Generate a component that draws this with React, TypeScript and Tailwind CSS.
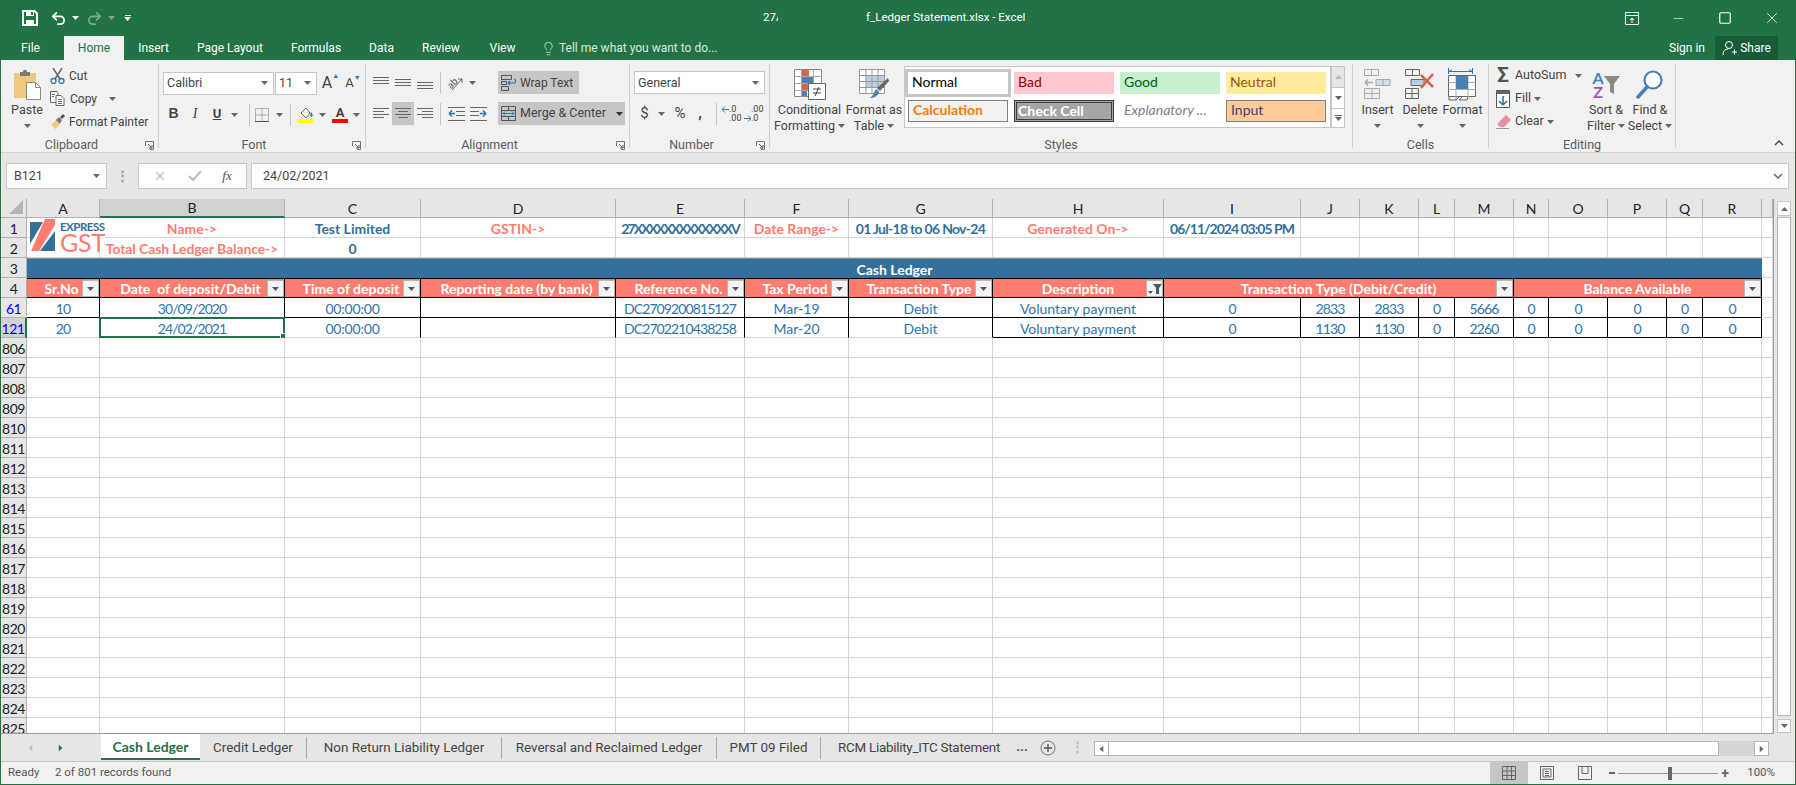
import { ReactNode } from "react";
import { Lightbulb, Minus, Redo2, Square, Undo2, X } from "lucide-react";

const uiFont = "font-['Roboto',sans-serif]";
const cellFont = "font-['Lato',sans-serif]";
const gridCols =
  "grid-cols-[26px_73px_185px_136px_195px_129px_104px_144px_171px_137px_59px_59px_36px_59px_35px_59px_59px_36px_59px_11px]";

const columns = ["A", "B", "C", "D", "E", "F", "G", "H", "I", "J", "K", "L", "M", "N", "O", "P", "Q", "R", ""];
const emptyRows = Array.from({ length: 20 }, (_, i) => 806 + i);

const ribbonTabs = [
  { name: "Insert", width: "w-[59px]" },
  { name: "Page Layout", width: "w-[94px]" },
  { name: "Formulas", width: "w-[78px]" },
  { name: "Data", width: "w-[53px]" },
  { name: "Review", width: "w-[66px]" },
  { name: "View", width: "w-[57px]" },
];

const tabs = [
  { name: "Credit Ledger", width: "w-[107px]" },
  { name: "Non Return Liability Ledger", width: "w-[195px]" },
  { name: "Reversal and Reclaimed Ledger", width: "w-[215px]" },
  { name: "PMT 09 Filed", width: "w-[104px]" },
  { name: "RCM Liability_ITC Statement", width: "w-[191px] pl-[5px] tracking-[-0.25px]" },
];

const data = [
  { row: 61, vals: ["10", "30/09/2020", "00:00:00", "", "DC2709200815127", "Mar-19", "Debit", "Voluntary payment", "0", "2833", "2833", "0", "5666", "0", "0", "0", "0", "0"] },
  { row: 121, vals: ["20", "24/02/2021", "00:00:00", "", "DC2702210438258", "Mar-20", "Debit", "Voluntary payment", "0", "1130", "1130", "0", "2260", "0", "0", "0", "0", "0"] },
];

function Caret({ color = "#666" }: { color?: string }) {
  return (
    <svg width="7" height="4" viewBox="0 0 7 4" className="shrink-0">
      <path d="M0 0h7L3.5 4z" fill={color} />
    </svg>
  );
}

function Launcher() {
  return (
    <svg width="9" height="9" viewBox="0 0 9 9" className="shrink-0">
      <path d="M.5 5V.5H8.5V8.5H5" fill="none" stroke="#777" />
      <path d="M3 3l4 4M7 4v3H4" fill="none" stroke="#555" />
    </svg>
  );
}

function Sep() {
  return <div className="w-px h-[22px] bg-[#c6c6c6] shrink-0" />;
}

function Group({ width, label, launcher, children }: { width: string; label: string; launcher?: boolean; children: ReactNode }) {
  return (
    <section className={`${width} h-[84px] shrink-0 border-r border-[#cfcfcf] flex flex-col`}>
      <div className="h-[72px] shrink-0">{children}</div>
      <div className="h-[12px] flex items-center text-[12.5px] leading-[16px] text-[#5c5c5c] pt-[5px]">
        <span className="flex-1 text-center">{label}</span>
        {launcher ? (
          <span className="w-[16px] flex justify-end pr-[4px] pt-[2px]">
            <Launcher />
          </span>
        ) : null}
      </div>
    </section>
  );
}

function Slot({ w, children }: { w: string; children?: ReactNode }) {
  return <div className={`${w} h-[23px] flex items-center justify-center shrink-0`}>{children}</div>;
}

function LargeButton({ icon, lines, w, caretInline }: { icon: ReactNode; lines: string[]; w: string; caretInline?: boolean }) {
  return (
    <div className={`${w} shrink-0 flex flex-col items-center pt-[3px] text-[12.5px] leading-[16px] text-[#444]`}>
      <div className="h-[35px] flex items-center justify-center">{icon}</div>
      {lines.map((line, i) => (
        <div key={line} className="flex items-center gap-[3px] whitespace-nowrap">
          {line}
          {caretInline && i === lines.length - 1 ? <Caret /> : null}
        </div>
      ))}
      {!caretInline ? (
        <div className="h-[16px] flex items-center">
          <Caret />
        </div>
      ) : null}
    </div>
  );
}

function Combo({ w, text }: { w: string; text: string }) {
  return (
    <div className={`${w} h-[23px] shrink-0 bg-white border border-[#c6c6c6] flex items-center justify-between pl-[3px] pr-[5px] text-[12.5px] text-[#444]`}>
      <span className="pt-[1px]">{text}</span>
      <Caret />
    </div>
  );
}

function Lines({ rows }: { rows: number[][] }) {
  return (
    <svg width="16" height="14" viewBox="0 0 16 14">
      {rows.map(([x1, x2, y]) => (
        <path key={y} d={`M${x1} ${y + 0.5}H${x2}`} stroke="#666" />
      ))}
    </svg>
  );
}

function SaveIcon() {
  return (
    <svg width="16" height="16" viewBox="0 0 16 16">
      <path d="M1 1h11.5L15 3.5V15H1z" fill="none" stroke="#fff" strokeWidth="2" />
      <path d="M4 1h8v5H4z M4 10h8v5H4z" fill="#fff" />
      <path d="M9 2h2v3H9z" fill="#217346" />
    </svg>
  );
}

function PasteIcon() {
  return (
    <svg width="29" height="32" viewBox="0 0 29 32">
      <path d="M1 4h22v25H1z" fill="#edc87e" />
      <path d="M7 3h3c0-3 4-3 4 0h3v4H7z" fill="#7a7a7a" />
      <path d="M13.5 13.5h9l5 5v12h-14z" fill="#fff" stroke="#8a8a8a" />
      <path d="M22.5 13.5v5h5" fill="none" stroke="#8a8a8a" />
    </svg>
  );
}

function CutIcon() {
  return (
    <svg width="15" height="16" viewBox="0 0 15 16">
      <path d="M3 0l7 11M12 0L5 11" stroke="#666" strokeWidth="1.5" />
      <circle cx="3.5" cy="13" r="2.5" fill="none" stroke="#2f75b5" strokeWidth="1.3" />
      <circle cx="11.5" cy="13" r="2.5" fill="none" stroke="#2f75b5" strokeWidth="1.3" />
    </svg>
  );
}

function CopyIcon() {
  return (
    <svg width="15" height="15" viewBox="0 0 15 15">
      <path d="M1 .5h6l1 2v9H.5V.5z" fill="#fff" stroke="#666" />
      <path d="M6 4.5h5l3 3v7H6z" fill="#fff" stroke="#666" />
      <path d="M8 8.5h4M8 10.5h4M8 12.5h4M2 3.5h3M2 5.5h2" stroke="#666" />
    </svg>
  );
}

function PainterIcon() {
  return (
    <svg width="16" height="16" viewBox="0 0 16 16">
      <path d="M1 11l5-5 4 4-4 5-2-1-1-2z" fill="#edc87e" />
      <path d="M6 6l3-3 3 3-2 4z" fill="#777" />
      <path d="M10 3l3-3 2 2-3 3z" fill="#555" />
    </svg>
  );
}

function BorderIcon() {
  return (
    <svg width="14" height="14" viewBox="0 0 14 14">
      <path d="M.5.5h13v13H.5zM7 .5v13M.5 7h13" fill="none" stroke="#777" strokeDasharray="1 1" />
      <path d="M0 13.5h14" stroke="#555" />
    </svg>
  );
}

function FillIcon() {
  return (
    <svg width="16" height="17" viewBox="0 0 16 17">
      <path d="M3 7l5-5 4 5-4 5z" fill="#fff" stroke="#666" />
      <path d="M13 6c2 2 2 4 1 5-2 0-2-3-1-5z" fill="#2f75b5" />
      <path d="M0 13h16v4H0z" fill="#ffff00" />
    </svg>
  );
}

function OrientationIcon() {
  return (
    <svg width="18" height="18" viewBox="0 0 18 18">
      <text x="0" y="12" fontSize="10" fill="#555" fontFamily="Lato" transform="rotate(-45 6 9)">ab</text>
      <path d="M5 16L15 5M15 5h-4M15 5v4" fill="none" stroke="#666" />
    </svg>
  );
}

function WrapIcon() {
  return (
    <svg width="15" height="16" viewBox="0 0 15 16">
      <path d="M.5.5h10v4H.5zM.5 6.5h5v3h-5zM.5 11.5h7v4h-7z" fill="none" stroke="#555" />
      <path d="M7 8h6c2 0 2-4 0-4M7 8l2-2M7 8l2 2" fill="none" stroke="#2f75b5" strokeWidth="1.2" />
    </svg>
  );
}

function MergeIcon() {
  return (
    <svg width="15" height="15" viewBox="0 0 15 15">
      <path d="M.5.5h14v14H.5zM.5 4.5h14M.5 10.5h14M7.5.5v4M7.5 10.5v4" fill="none" stroke="#555" />
      <path d="M2 7.5h11M2 7.5l2-2M2 7.5l2 2M13 7.5l-2-2M13 7.5l-2 2" fill="none" stroke="#2f75b5" />
    </svg>
  );
}

function IndentIcon({ flip }: { flip?: boolean }) {
  return (
    <svg width="17" height="14" viewBox="0 0 17 14" className={flip ? "-scale-x-100" : ""}>
      <path d="M0 .5h17M8 4.5h9M8 8.5h9M0 13.5h17" stroke="#666" />
      <path d="M7 6.5H1M1 6.5l3-3M1 6.5l3 3" fill="none" stroke="#2f75b5" strokeWidth="1.5" />
    </svg>
  );
}

function DecimalIcon({ top, bottom, right }: { top: string; bottom: string; right?: boolean }) {
  return (
    <div className="w-[20px] h-[18px] grid grid-cols-[7px_13px] grid-rows-2 text-[9px] leading-[9px] text-[#444] items-center">
      <svg width="7" height="7" viewBox="0 0 7 7" className={right ? "row-start-2 col-start-1" : "row-start-1 col-start-1"}>
        <path d="M0 3.5h7M0 3.5l3-3M0 3.5l3 3" fill="none" stroke="#2f75b5" transform={right ? "rotate(180 3.5 3.5)" : undefined} />
      </svg>
      <span className="row-start-1 col-start-2">{top}</span>
      <span className="row-start-2 col-start-2">{bottom}</span>
    </div>
  );
}

function ConditionalIcon() {
  return (
    <svg width="32" height="31" viewBox="0 0 32 31">
      <path d="M.5.5h27v27H.5z" fill="#fff" stroke="#888" />
      <path d="M8 1h7v6H8z" fill="#d9634a" />
      <path d="M8 8h11v6H8z" fill="#4a80b8" />
      <path d="M8 15h8v6H8z" fill="#d9634a" />
      <path d="M8 22h5v5H8z" fill="#4a80b8" />
      <path d="M1 7.5h27M1 14.5h27M1 21.5h27M7.5 1v27M19.5 1v27" stroke="#aaa" />
      <path d="M14.5 14.5h17v16h-17z" fill="#fff" stroke="#666" />
      <path d="M19 20h8M19 24h8M25 18l-4 9" stroke="#444" fill="none" />
    </svg>
  );
}

function TableIcon() {
  return (
    <svg width="30" height="31" viewBox="0 0 30 31">
      <path d="M.5.5h25v24H.5z" fill="#fff" stroke="#999" />
      <path d="M7 7h18v11H7z" fill="#b8cde6" />
      <path d="M.5 6.5h25M.5 12.5h25M.5 18.5h25M7 1v24M13 1v24M19 1v24" stroke="#999" />
      <path d="M29 9l1 3-9 10-3-3z" fill="#666" />
      <path d="M17 20l3 3c-1 4-5 6-9 6 3-2 4-6 6-9z" fill="#4a80b8" />
    </svg>
  );
}

function InsertIcon() {
  return (
    <svg width="27" height="31" viewBox="0 0 27 31">
      <path d="M.5.5h14v6H.5zM7.5 1v6M.5 19.5h15v10H.5zM.5 24.5h15M8 20v10" fill="none" stroke="#aaa" />
      <path d="M12 10.5h14v6H12zM19 11v6" fill="#d5dde8" stroke="#aaa" />
      <path d="M9 13.5H1M1 13.5l3-3M1 13.5l3 3" fill="none" stroke="#aaa" strokeWidth="1.5" />
    </svg>
  );
}

function DeleteIcon() {
  return (
    <svg width="30" height="31" viewBox="0 0 30 31">
      <path d="M.5.5h14v6H.5zM7.5 1v6M.5 19.5h13v10H.5zM.5 24.5h13M7 20v10" fill="none" stroke="#666" />
      <path d="M6 10.5h13v6H6z" fill="#b8cde6" stroke="#666" />
      <path d="M16 6l12 12M28 5L16 19" stroke="#d9634a" strokeWidth="2.5" />
    </svg>
  );
}

function FormatIcon() {
  return (
    <svg width="29" height="33" viewBox="0 0 29 33">
      <path d="M1 3.5h23M1 3.5l3-2M24 3.5l-3-2M.5 0v6M24.5 0v6" fill="none" stroke="#2f75b5" />
      <path d="M.5 7.5h27v21H.5z" fill="#fff" stroke="#666" />
      <path d="M.5 14.5h27M.5 21.5h27M8 8v25M20 8v21" stroke="#aaa" />
      <path d="M8 8h12v13H8z" fill="#4a80b8" />
      <path d="M1 29v3h7l3-3M14 29l-3 3h8l1-3" fill="none" stroke="#666" />
    </svg>
  );
}

function FillDownIcon() {
  return (
    <svg width="14" height="18" viewBox="0 0 14 18">
      <path d="M.5.5h13v17H.5z" fill="#fff" stroke="#555" />
      <path d="M1 1h12v3H1z" fill="#666" />
      <path d="M7 6v9M7 15l-4-4M7 15l4-4" fill="none" stroke="#2f75b5" strokeWidth="1.6" />
    </svg>
  );
}

function EraserIcon() {
  return (
    <svg width="15" height="14" viewBox="0 0 15 14">
      <path d="M10 0l5 5-7 7H4L1 9z" fill="#ec8f9c" />
      <path d="M0 13.5h13" stroke="#999" />
    </svg>
  );
}

function SortIcon() {
  return (
    <div className={`h-[31px] flex items-center ${cellFont}`}>
      <div className="flex flex-col items-center text-[16px] leading-[14px] font-bold">
        <span className="text-[#4a80b8]">A</span>
        <span className="text-[#9b59b6]">Z</span>
      </div>
      <svg width="16" height="20" viewBox="0 0 16 20">
        <path d="M0 1h16l-6 8v10l-4-2V9z" fill="#8a8a8a" />
      </svg>
    </div>
  );
}

function FindIcon() {
  return (
    <svg width="28" height="31" viewBox="0 0 28 31">
      <circle cx="17" cy="11" r="8.5" fill="#fff" stroke="#4a80b8" strokeWidth="2.2" />
      <path d="M11 18L2 28" stroke="#4a80b8" strokeWidth="3.5" strokeLinecap="round" />
    </svg>
  );
}

function ExpressLogo() {
  return (
    <div className={`absolute left-[3px] top-[1px] z-10 w-[75px] h-[33px] bg-white flex gap-[5px] overflow-hidden ${cellFont}`}>
      <svg width="25" height="33" viewBox="0 0 25 33" className="shrink-0">
        <path d="M0 3h13L0 25z" fill="#33709b" />
        <path d="M25 12v20H10z" fill="#33709b" />
        <path d="M15 0h10v6L9 32H1z" fill="#ff7c70" />
      </svg>
      <div className="flex flex-col pt-[3px] leading-none">
        <span className="text-[11.5px] font-bold text-[#33709b] tracking-[-0.5px] leading-[10px]">EXPRESS</span>
        <span className="text-[25px] text-[#ff7c70] leading-[20px] tracking-[-0.3px]">GST</span>
      </div>
    </div>
  );
}

function FilterButton({ active }: { active?: boolean }) {
  return (
    <div className="absolute right-0 top-[1px] z-10 w-[17px] h-[17px] bg-[#f3f4f6] border border-[#b8b8b8] flex items-center justify-center">
      {active ? (
        <svg width="14" height="12" viewBox="0 0 14 12">
          <path d="M5 1h9L11 5v6H8V5z" fill="#555" />
          <path d="M0 8h5L2.5 11z" fill="#555" />
        </svg>
      ) : (
        <Caret color="#555" />
      )}
    </div>
  );
}

const plain = "border-r border-b border-[#d4d4d4]";
const center = `flex items-center justify-center overflow-hidden whitespace-nowrap text-[14px] pt-[1px] ${cellFont}`;

function SheetCell({ className, children }: { className?: string; children?: ReactNode }) {
  return <div className={`${center} ${className ?? plain}`}>{children}</div>;
}

function RowHead({ label, selected, blue }: { label: number; selected?: boolean; blue?: boolean }) {
  return (
    <div
      className={`flex items-center justify-center overflow-hidden border-r border-b border-[#b1b1b1] pt-[1px] text-[14px] tracking-[-0.5px] ${cellFont} ${selected ? "bg-[#d2d2d2] border-r-2 border-r-[#217346]" : "bg-[#e6e6e6]"} ${blue ? "text-[#0000ff]" : "text-[#222]"}`}
    >
      {label}
    </div>
  );
}

function Blank({ from }: { from: number }) {
  return (
    <>
      {Array.from({ length: 20 - from }, (_, i) => (
        <SheetCell key={i} />
      ))}
    </>
  );
}

// letter spacing per value: Lato's digits run wider than the sheet's font
function valueTracking(v: string) {
  if (v.includes(":")) return "tracking-[-0.2px]";
  if (/^[DC\d/]+$/.test(v)) return "tracking-[-0.9px]";
  return "";
}

function Sheet() {
  const label = `${plain} font-bold text-[#ff7c70]`;
  const value = `${plain} font-bold text-[#33709b]`;
  const head = "relative bg-[#ff7c70] text-white font-bold border-r border-t border-b border-black";
  const headers = ["Sr.No", "Date  of deposit/Debit", "Time of deposit", "Reporting date (by bank)", "Reference No.", "Tax Period", "Transaction Type"];

  return (
    <div className={`grid ${gridCols} grid-rows-[19px] auto-rows-[20px] w-[1773px] h-[535px] overflow-hidden bg-white border-b border-r border-[#9c9c9c]`}>
      {/* column letters */}
      <div className="bg-[#e6e6e6] border-r border-b border-[#b1b1b1] flex items-end justify-end p-[3px]">
        <svg width="14" height="14" viewBox="0 0 14 14">
          <path d="M14 0v14H0z" fill="#b5b5b5" />
        </svg>
      </div>
      {columns.map((c, i) => (
        <div
          key={i}
          className={`flex items-center justify-center text-[14px] text-[#222] ${cellFont} border-r border-[#b1b1b1] ${i === 1 ? "bg-[#d2d2d2] border-b-2 border-b-[#217346]" : "bg-[#e6e6e6] border-b"}`}
        >
          {c}
        </div>
      ))}

      {/* row 1 */}
      <RowHead label={1} />
      <SheetCell className={`${plain} relative overflow-visible`}>
        <ExpressLogo />
      </SheetCell>
      <SheetCell className={label}>Name-&gt;</SheetCell>
      <SheetCell className={value}>Test Limited</SheetCell>
      <SheetCell className={label}>GSTIN-&gt;</SheetCell>
      <SheetCell className={`${value} tracking-[-1.9px]`}>27XXXXXXXXXXXXXV</SheetCell>
      <SheetCell className={label}>Date Range-&gt;</SheetCell>
      <SheetCell className={`${value} tracking-[-0.7px]`}>01 Jul-18 to 06 Nov-24</SheetCell>
      <SheetCell className={label}>Generated On-&gt;</SheetCell>
      <SheetCell className={`${value} tracking-[-1px]`}>06/11/2024 03:05 PM</SheetCell>
      <Blank from={10} />

      {/* row 2 */}
      <RowHead label={2} />
      <SheetCell />
      <SheetCell className={`${label} tracking-[-0.1px]`}>Total Cash Ledger Balance-&gt;</SheetCell>
      <SheetCell className={value}>0</SheetCell>
      <Blank from={4} />

      {/* row 3 */}
      <RowHead label={3} />
      <div className={`${center} col-span-18 bg-[#33709b] text-white font-bold border-t border-[#888]`}>Cash Ledger</div>
      <SheetCell />

      {/* row 4 */}
      <RowHead label={4} />
      {headers.map((h) => (
        <div key={h} className={`${center} ${head} whitespace-pre`}>
          <span className="pr-[3px]">{h}</span>
          <FilterButton />
        </div>
      ))}
      <div className={`${center} ${head}`}>
        Description
        <FilterButton active />
      </div>
      <div className={`${center} ${head} col-span-5`}>
        Transaction Type (Debit/Credit)
        <FilterButton />
      </div>
      <div className={`${center} ${head} col-span-5`}>
        Balance Available
        <FilterButton />
      </div>
      <SheetCell />

      {/* filtered rows */}
      {data.map((d, r) => (
        <div key={d.row} className="contents">
          <RowHead label={d.row} blue selected={d.row === 121} />
          {d.vals.map((v, i) => {
            const selected = d.row === 121 && i === 1;
            const bottom = r === 0 || i >= 7 ? "border-b border-b-black" : "border-b border-b-[#d4d4d4]";
            return (
              <SheetCell key={i} className={`relative text-[#2f74a8] overflow-visible border-r border-r-black ${bottom} ${valueTracking(v)}`}>
                {v}
                {selected ? (
                  <div className="absolute -left-px -top-px -right-px -bottom-px z-10 border-2 border-[#217346]">
                    <div className="absolute -right-[3px] -bottom-[3px] w-[6px] h-[6px] bg-[#217346] border border-white" />
                  </div>
                ) : null}
              </SheetCell>
            );
          })}
          <SheetCell />
        </div>
      ))}

      {/* empty rows */}
      {emptyRows.map((n) => (
        <div key={n} className="contents">
          <RowHead label={n} />
          <Blank from={1} />
        </div>
      ))}
    </div>
  );
}

function Ribbon() {
  return (
    <div className={`h-[93px] bg-[#f1f1f1] border-b border-[#d2d2d2] pt-[4px] flex items-start relative ${uiFont}`}>
      <Group width="w-[158px]" label="Clipboard" launcher>
        <div className="flex">
          <div className="w-[49px] pl-[3px] shrink-0">
            <LargeButton w="w-[46px]" icon={<PasteIcon />} lines={["Paste"]} />
          </div>
          <div className="flex flex-col text-[12px] text-[#444]">
            <div className="h-[23px] flex items-center gap-[4px]">
              <CutIcon />
              Cut
            </div>
            <div className="h-[23px] flex items-center gap-[5px]">
              <CopyIcon />
              Copy
              <span className="ml-[7px]">
                <Caret />
              </span>
            </div>
            <div className="h-[23px] flex items-center gap-[3px] whitespace-nowrap">
              <PainterIcon />
              Format Painter
            </div>
          </div>
        </div>
      </Group>

      <Group width="w-[207px]" label="Font" launcher>
        <div className="pt-[7px] pl-[4px] flex flex-col gap-[8px]">
          <div className="flex items-center gap-px">
            <Combo w="w-[111px]" text="Calibri" />
            <Combo w="w-[42px]" text="11" />
            <div className="w-[23px] flex items-start justify-center text-[16px] text-[#444] pl-[2px]">
              A<span className="text-[7px] text-[#2f75b5]">▲</span>
            </div>
            <div className="w-[22px] flex items-start justify-center text-[13px] text-[#444]">
              A<span className="text-[7px] text-[#2f75b5]">▼</span>
            </div>
          </div>
          <div className="flex items-center text-[13px] text-[#444]">
            <Slot w="w-[21px]"><b className="font-['Liberation_Sans',sans-serif] text-[14px] pb-[2px]">B</b></Slot>
            <Slot w="w-[22px]"><i className="font-['Liberation_Serif',serif] text-[14px] pb-[2px]">I</i></Slot>
            <Slot w="w-[22px]"><span className="underline font-bold pb-[2px]">U</span></Slot>
            <Slot w="w-[13px]"><Caret /></Slot>
            <Slot w="w-[8px]" />
            <Sep />
            <Slot w="w-[2px]" />
            <Slot w="w-[20px]"><BorderIcon /></Slot>
            <Slot w="w-[14px]"><Caret /></Slot>
            <Slot w="w-[4px]" />
            <Sep />
            <Slot w="w-[5px]" />
            <Slot w="w-[20px]"><FillIcon /></Slot>
            <Slot w="w-[12px]"><Caret /></Slot>
            <Slot w="w-[2px]" />
            <Slot w="w-[20px]">
              <div className="flex flex-col items-center leading-[13px] font-bold">
                A
                <div className="w-[16px] h-[4px] bg-[#ff0000]" />
              </div>
            </Slot>
            <Slot w="w-[12px]"><Caret /></Slot>
          </div>
        </div>
      </Group>

      <Group width="w-[264px]" label="Alignment" launcher>
        <div className="pt-[7px] pl-[4px] flex flex-col gap-[8px] text-[12.5px] text-[#444]">
          <div className="flex items-center">
            <Slot w="w-[22px]"><Lines rows={[[0, 16, 1], [0, 16, 4], [0, 16, 7]]} /></Slot>
            <Slot w="w-[22px]"><Lines rows={[[0, 16, 3], [0, 16, 6], [0, 16, 9]]} /></Slot>
            <Slot w="w-[22px]"><Lines rows={[[0, 16, 6], [0, 16, 9], [0, 16, 12]]} /></Slot>
            <Slot w="w-[4px]" />
            <Sep />
            <Slot w="w-[4px]" />
            <Slot w="w-[22px]"><OrientationIcon /></Slot>
            <Slot w="w-[10px]"><Caret /></Slot>
            <Slot w="w-[21px]" />
            <div className="w-[81px] h-[23px] bg-[#c6c6c6] flex items-center gap-[4px] pl-[3px] text-[12px]">
              <WrapIcon />
              <span className="pt-[1px]">Wrap Text</span>
            </div>
          </div>
          <div className="flex items-center">
            <Slot w="w-[22px]"><Lines rows={[[0, 16, 1], [0, 11, 4], [0, 16, 7], [0, 11, 10]]} /></Slot>
            <Slot w="w-[22px]"><div className="w-[22px] h-[23px] bg-[#c6c6c6] flex items-center justify-center"><Lines rows={[[0, 16, 1], [3, 13, 4], [0, 16, 7], [3, 13, 10]]} /></div></Slot>
            <Slot w="w-[22px]"><Lines rows={[[0, 16, 1], [5, 16, 4], [0, 16, 7], [5, 16, 10]]} /></Slot>
            <Slot w="w-[4px]" />
            <Sep />
            <Slot w="w-[4px]" />
            <Slot w="w-[22px]"><IndentIcon /></Slot>
            <Slot w="w-[22px]"><IndentIcon flip /></Slot>
            <Slot w="w-[9px]" />
            <div className="w-[127px] h-[23px] bg-[#c6c6c6] flex items-center gap-[4px] pl-[3px] whitespace-nowrap">
              <MergeIcon />
              Merge &amp; Center
              <span className="ml-[6px]"><Caret color="#333" /></span>
            </div>
          </div>
        </div>
      </Group>

      <Group width="w-[140px]" label="Number" launcher>
        <div className="pt-[7px] pl-[4px] flex flex-col gap-[8px] text-[#444]">
          <Combo w="w-[131px]" text="General" />
          <div className="flex items-center text-[15px]">
            <Slot w="w-[21px]">$</Slot>
            <Slot w="w-[12px]"><Caret /></Slot>
            <Slot w="w-[3px]" />
            <Slot w="w-[20px]">%</Slot>
            <Slot w="w-[20px]"><b>,</b></Slot>
            <Slot w="w-[6px]" />
            <Sep />
            <Slot w="w-[4px]" />
            <Slot w="w-[22px]"><DecimalIcon top=".0" bottom=".00" /></Slot>
            <Slot w="w-[22px]"><DecimalIcon top=".00" bottom=".0" right /></Slot>
          </div>
        </div>
      </Group>

      <Group width="w-[583px]" label="Styles">
        <div className="flex items-start pl-[5px]">
          <LargeButton w="w-[69px]" icon={<ConditionalIcon />} lines={["Conditional", "Formatting"]} caretInline />
          <LargeButton w="w-[60px]" icon={<TableIcon />} lines={["Format as", "Table"]} caretInline />
          <div className={`mt-[2px] w-[441px] h-[62px] flex ${cellFont} text-[14px]`}>
            <div className="w-[427px] border border-[#c6c6c6] bg-white grid grid-cols-[100px_100px_100px_100px] grid-rows-[22px_22px] gap-[6px] pl-[3px] pt-[5px]">
              <div className="bg-white outline-[3px] outline-[#c6c6c6] flex items-center pl-[4px] pb-[3px] text-black">Normal</div>
              <div className="bg-[#ffc7ce] text-[#9c0006] flex items-center pl-[4px] pb-[3px]">Bad</div>
              <div className="bg-[#c6efce] text-[#006100] flex items-center pl-[4px] pb-[3px]">Good</div>
              <div className="bg-[#ffeb9c] text-[#9c5700] flex items-center pl-[4px] pb-[3px]">Neutral</div>
              <div className="bg-[#f2f2f2] border border-[#7f7f7f] text-[#fa7d00] font-bold flex items-center pl-[4px] pb-[3px]">Calculation</div>
              <div className="bg-[#a5a5a5] border-[3px] border-double border-[#3f3f3f] text-white font-bold flex items-center pl-[1px] pb-[2px]">Check Cell</div>
              <div className="italic text-[#7f7f7f] flex items-center pl-[4px] pb-[3px] whitespace-nowrap">Explanatory ...</div>
              <div className="bg-[#ffcc99] border border-[#7f7f7f] text-[#3f3f76] flex items-center pl-[4px] pb-[3px]">Input</div>
            </div>
            <div className="w-[14px] flex flex-col">
              <div className="h-[22px] bg-[#e6e6e6] border border-[#c6c6c6] flex items-center justify-center">
                <span className="rotate-180 flex"><Caret color="#bbb" /></span>
              </div>
              <div className="h-[20px] bg-white border-x border-[#c6c6c6] flex items-center justify-center">
                <Caret />
              </div>
              <div className="h-[20px] bg-white border border-[#c6c6c6] flex flex-col gap-[1px] items-center justify-center">
                <div className="w-[7px] h-px bg-[#666]" />
                <Caret />
              </div>
            </div>
          </div>
        </div>
      </Group>

      <Group width="w-[136px]" label="Cells">
        <div className="flex pl-[3px]">
          <LargeButton w="w-[43px]" icon={<InsertIcon />} lines={["Insert"]} />
          <LargeButton w="w-[42px]" icon={<DeleteIcon />} lines={["Delete"]} />
          <LargeButton w="w-[43px]" icon={<FormatIcon />} lines={["Format"]} />
        </div>
      </Group>

      <Group width="w-[187px]" label="Editing">
        <div className="flex pl-[5px] text-[12.5px] text-[#444]">
          <div className="w-[90px] shrink-0 flex flex-col">
            <div className="h-[23px] flex items-center">
              <span className="w-[18px] text-[21px] leading-none font-bold text-[#555] text-center">Σ</span>
              <span className="ml-[3px]">AutoSum</span>
              <span className="ml-[9px]"><Caret /></span>
            </div>
            <div className="h-[23px] flex items-center">
              <span className="w-[18px] flex justify-center"><FillDownIcon /></span>
              <span className="ml-[3px]">Fill</span>
              <span className="ml-[3px]"><Caret /></span>
            </div>
            <div className="h-[23px] flex items-center">
              <span className="w-[18px] flex justify-center"><EraserIcon /></span>
              <span className="ml-[3px]">Clear</span>
              <span className="ml-[3px]"><Caret /></span>
            </div>
          </div>
          <LargeButton w="w-[44px]" icon={<SortIcon />} lines={["Sort &", "Filter"]} caretInline />
          <LargeButton w="w-[44px]" icon={<FindIcon />} lines={["Find &", "Select"]} caretInline />
        </div>
      </Group>

      <svg width="10" height="6" viewBox="0 0 10 6" className="absolute right-[11px] bottom-[6px]">
        <path d="M1 5l4-4 4 4" fill="none" stroke="#555" strokeWidth="1.6" />
      </svg>
    </div>
  );
}

export default function App() {
  return (
    <div className={`w-[1796px] h-[785px] overflow-hidden flex flex-col bg-[#e6e6e6] border-x border-b border-[#217346] ${uiFont}`}>
      {/* title bar */}
      <div className="h-[36px] bg-[#217346] flex items-center text-white shrink-0">
        <div className="pl-[21px] flex items-center">
          <SaveIcon />
          <div className="ml-[12px] flex items-center gap-[5px]">
            <Undo2 size={17} strokeWidth={2.4} />
            <Caret color="#fff" />
          </div>
          <div className="ml-[7px] flex items-center gap-[5px] opacity-40">
            <Redo2 size={17} strokeWidth={2.4} />
            <Caret color="#fff" />
          </div>
          <div className="ml-[9px] flex flex-col gap-[1px] items-center">
            <div className="w-[6px] h-px bg-white" />
            <Caret color="#fff" />
          </div>
        </div>
        <div className="ml-[632px] flex items-center text-[11.5px] whitespace-nowrap">
          <span className="w-[15px] overflow-hidden">27A</span>
          <span className="ml-[88px]">f_Ledger Statement.xlsx - Excel</span>
        </div>
        <div className="ml-auto flex items-center">
          <svg width="14" height="13" viewBox="0 0 14 13">
            <path d="M.5.5h13v12H.5zM.5 3.5h13M7 11V6M5 8l2-2 2 2" fill="none" stroke="#fff" />
          </svg>
          <div className="w-[46px] ml-[16px] flex justify-center"><Minus size={15} strokeWidth={1} /></div>
          <div className="w-[47px] flex justify-center"><Square size={14} strokeWidth={1.2} absoluteStrokeWidth /></div>
          <div className="w-[47px] flex justify-center"><X size={18} strokeWidth={1} /></div>
        </div>
      </div>

      {/* ribbon tabs */}
      <div className="h-[24px] bg-[#217346] flex items-stretch text-white text-[12px] shrink-0">
        <div className="w-[63px] flex items-center justify-center pr-[4px]">File</div>
        <div className="w-[60px] bg-[#f1f1f1] text-[#217346] flex items-center justify-center">Home</div>
        {ribbonTabs.map((t) => (
          <div key={t.name} className={`${t.width} flex items-center justify-center`}>
            {t.name}
          </div>
        ))}
        <div className="ml-[10px] flex items-center gap-[3px] text-[#d8e8de]">
          <Lightbulb size={15} strokeWidth={1.2} />
          Tell me what you want to do...
        </div>
        <div className="ml-auto flex items-center">
          Sign in
          <div className="ml-[10px] mr-[17px] w-[63px] h-full bg-[#185c37] flex items-center justify-center gap-[3px]">
            <svg width="15" height="16" viewBox="0 0 15 16">
              <circle cx="7" cy="5" r="3.5" fill="none" stroke="#fff" />
              <path d="M1 15c0-4 2-6 5-6M10 12h5M12.5 9.5v5" fill="none" stroke="#fff" />
            </svg>
            Share
          </div>
        </div>
      </div>

      <Ribbon />

      {/* formula bar */}
      <div className="h-[46px] shrink-0 pt-[10px] flex items-start text-[12.5px] text-[#444]">
        <div className="ml-[5px] w-[101px] h-[26px] bg-white border border-[#c6c6c6] flex items-center justify-between pl-[7px] pr-[6px]">
          B121
          <Caret />
        </div>
        <div className="w-[31px] h-[26px] flex items-center justify-center text-[#999] font-bold">⋮</div>
        <div className="w-[109px] h-[26px] bg-white border border-[#c6c6c6] flex items-center justify-around px-[4px]">
          <X size={14} color="#bbb" />
          <svg width="14" height="12" viewBox="0 0 14 12">
            <path d="M1 6l4 4 8-9" fill="none" stroke="#bbb" strokeWidth="2" />
          </svg>
          <i className="font-['Liberation_Serif',serif] text-[13px] text-[#555]">fx</i>
        </div>
        <div className="ml-[4px] w-[1538px] h-[26px] bg-white border border-[#c6c6c6] flex items-center justify-between pl-[11px] pr-[5px]">
          24/02/2021
          <svg width="10" height="6" viewBox="0 0 10 6">
            <path d="M1 1l4 4 4-4" fill="none" stroke="#666" strokeWidth="1.5" />
          </svg>
        </div>
      </div>

      {/* sheet and vertical scrollbar */}
      <div className="h-[535px] shrink-0 flex">
        <Sheet />
        <div className="ml-[3px] w-[14px] h-[534px] flex flex-col pt-[2px]">
          <div className="h-[15px] bg-white border border-[#c6c6c6] flex items-center justify-center">
            <span className="rotate-180 flex"><Caret /></span>
          </div>
          <div className="mt-[1px] flex-1 bg-white border border-[#b5b5b5]" />
          <div className="mt-[3px] h-[14px] bg-white border border-[#c6c6c6] flex items-center justify-center">
            <Caret />
          </div>
        </div>
      </div>

      {/* sheet tabs */}
      <div className="h-[28px] shrink-0 bg-[#e6e6e6] border-b border-[#c6c6c6] flex items-start text-[13.4px] text-[#444]">
        <div className="w-[100px] h-[27px] flex items-center pl-[26px] gap-[23px] shrink-0">
          <span className="rotate-90 flex"><Caret color="#c0c0c0" /></span>
          <span className="-rotate-90 flex"><Caret color="#217346" /></span>
        </div>
        <div className={`w-[99px] h-[26px] bg-white border-b-[2px] border-[#217346] text-[#217346] font-bold text-[14px] flex items-center justify-center shrink-0 ${cellFont}`}>
          Cash Ledger
        </div>
        {tabs.map((t, i) => (
          <div key={t.name} className={`${t.width} h-[22px] mt-[3px] shrink-0 flex items-center justify-center whitespace-nowrap ${i < tabs.length - 1 ? "border-r border-[#aaa]" : ""}`}>
            {t.name}
          </div>
        ))}
        <div className="w-[20px] h-[27px] flex items-center justify-center text-[#217346] font-bold shrink-0">...</div>
        <div className="ml-[8px] w-[16px] h-[27px] flex items-center shrink-0">
          <svg width="16" height="16" viewBox="0 0 16 16">
            <circle cx="8" cy="8" r="7" fill="none" stroke="#777" />
            <path d="M8 4v8M4 8h8" stroke="#555" strokeWidth="1.4" />
          </svg>
        </div>
        <div className="ml-[17px] w-[8px] h-[27px] flex items-center justify-center text-[#bbb] font-bold shrink-0">⋮</div>
        <div className="ml-[13px] mt-[7px] w-[675px] h-[15px] flex shrink-0">
          <div className="w-[15px] bg-white border border-[#b5b5b5] flex items-center justify-center">
            <span className="rotate-90 flex"><Caret /></span>
          </div>
          <div className="w-[610px] bg-white border border-[#b5b5b5] border-l-0" />
          <div className="flex-1 bg-[#d6d6d6]" />
          <div className="w-[15px] bg-white border border-[#b5b5b5] flex items-center justify-center">
            <span className="-rotate-90 flex"><Caret /></span>
          </div>
        </div>
      </div>

      {/* status bar */}
      <div className="flex-1 bg-[#f1f1f1] flex items-center text-[11.5px] text-[#555]">
        <span className="ml-[7px] w-[47px]">Ready</span>
        <span>2 of 801 records found</span>
        <div className="ml-auto h-full flex items-center">
          <div className="w-[38px] h-full bg-[#c6c6c6] flex items-center justify-center">
            <svg width="14" height="14" viewBox="0 0 14 14">
              <path d="M.5.5h13v13H.5zM5 .5v13M9.5.5v13M.5 5h13M.5 9.5h13" fill="none" stroke="#666" />
            </svg>
          </div>
          <div className="w-[38px] flex justify-center">
            <svg width="14" height="14" viewBox="0 0 14 14">
              <path d="M.5.5h13v13H.5zM3 3h8v8H3zM5 5.5h4M5 7.5h4M5 9.5h4" fill="none" stroke="#666" />
            </svg>
          </div>
          <div className="w-[38px] flex justify-center">
            <svg width="14" height="14" viewBox="0 0 14 14">
              <path d="M.5.5h13v13H.5zM4 .5v7h6V.5" fill="none" stroke="#666" />
            </svg>
          </div>
          <div className="ml-[5px] flex items-center">
            <div className="w-[6px] h-[2px] bg-[#666]" />
            <div className="relative ml-[3px] w-[100px] h-px bg-[#999]">
              <div className="absolute left-[50px] -top-[6px] w-[4px] h-[13px] bg-[#666]" />
            </div>
            <div className="ml-[3px] w-[8px] text-[14px] font-bold leading-none text-[#666]">+</div>
          </div>
          <span className="ml-[18px] mr-[20px]">100%</span>
        </div>
      </div>
    </div>
  );
}
